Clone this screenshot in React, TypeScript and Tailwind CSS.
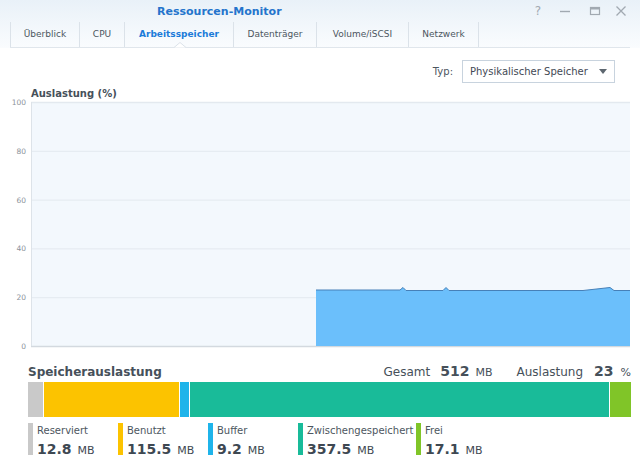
import React from "react";

const font = { fontFamily: '"DejaVu Sans", Verdana, sans-serif' };

const tabs = [
  { label: "Überblick", w: "w-[69px]" },
  { label: "CPU", w: "w-[45px]" },
  { label: "Arbeitsspeicher", w: "w-[109px]", active: true },
  { label: "Datenträger", w: "w-[83px]" },
  { label: "Volume/iSCSI", w: "w-[92px]" },
  { label: "Netzwerk", w: "w-[70px]" },
];

const legend = [
  { label: "Reserviert", value: "12.8", color: "bg-[#c9c9c9]", w: "w-[90px]" },
  { label: "Benutzt", value: "115.5", color: "bg-[#fcc300]", w: "w-[90px]" },
  { label: "Buffer", value: "9.2", color: "bg-[#1fb4ea]", w: "w-[90px]" },
  { label: "Zwischengespeichert", value: "357.5", color: "bg-[#19bb99]", w: "w-[118px]" },
  { label: "Frei", value: "17.1", color: "bg-[#80c528]", w: "w-[90px]" },
];

function WindowControls() {
  return (
    <div className="flex items-center gap-[14px] pr-[13px] text-[#a1a9b1]">
      <span className="text-[12px] leading-none">?</span>
      <svg width="12" height="12" viewBox="0 0 12 12" className="ml-[4px]">
        <path d="M1 6.5 H11" stroke="currentColor" strokeWidth="1.4" />
      </svg>
      <svg width="12" height="12" viewBox="0 0 12 12" className="ml-[4px]">
        <rect x="1.5" y="2.5" width="9" height="7" fill="none" stroke="currentColor" strokeWidth="1.2" />
        <path d="M1.5 3.5 H10.5" stroke="currentColor" strokeWidth="2" />
      </svg>
      <svg width="12" height="12" viewBox="0 0 12 12">
        <path d="M1.5 1.5 L10.5 10.5 M10.5 1.5 L1.5 10.5" stroke="currentColor" strokeWidth="1.3" />
      </svg>
    </div>
  );
}

// svg sits at page y 99; the plot's 100% line is at page y 102
function Chart() {
  const labels = [100, 80, 60, 40, 20, 0];
  const top = 3;
  const step = 48.8;
  const base = top + step * 5;
  const pts: [number, number][] = [
    [316, 290], [400, 290], [403, 287.5], [406, 290.5], [443, 290.5], [446, 287.5],
    [449, 290.5], [583, 290.5], [610, 287.5], [614, 290.5], [630, 290.5],
  ];
  const l = pts.map(([x, y], i) => `${i ? "L" : "M"}${x} ${y - 99}`).join(" ");
  return (
    <svg width="640" height="253" viewBox="0 0 640 253" className="block overflow-visible">
      <rect x="31" y={top} width="599" height={step * 5} fill="#f3f8fd" />
      {labels.map((v, i) => (
        <g key={v}>
          <line
            x1="31"
            x2="630"
            y1={top + i * step + 0.5}
            y2={top + i * step + 0.5}
            stroke={i === 5 ? "#d3d9df" : "#e3e9ef"}
            strokeWidth={i === 0 || i === 5 ? 1.5 : 1}
          />
          <text x="26" y={top + i * step + 3} textAnchor="end" fontSize="7.5" fill="#8b939b" style={font}>
            {v}
          </text>
        </g>
      ))}
      <line x1="31.5" x2="31.5" y1={top} y2={base} stroke="#dde3e9" />
      <path d={`${l} L630 ${base} L316 ${base} Z`} fill="#6bbffb" />
      <path d={l} fill="none" stroke="#4680b8" strokeWidth="1" />
    </svg>
  );
}

export default function App() {
  return (
    <div className="w-[640px] h-[466px] bg-white overflow-hidden text-[#46505a]" style={font}>
      <header className="h-[48px] bg-gradient-to-b from-[#e9f1f8] to-[#fafcfe]">
        <div className="h-[22px] flex items-center justify-between">
          <span className="pl-[157px] pt-[2px] text-[11px] font-bold text-[#2474cc]">Ressourcen-Monitor</span>
          <WindowControls />
        </div>
        <div className="relative mx-[10px] h-[26px] flex items-stretch border-b border-[#e0e6ec]">
          {tabs.map((t) => (
            <div
              key={t.label}
              className={`${t.w} flex items-center justify-center border-l border-[#dbe2e9] text-[9px] ${
                t.active ? "font-bold text-[#1b7bd9]" : "text-[#4c5660]"
              }`}
            >
              {t.label}
            </div>
          ))}
          <div className="border-l border-[#dbe2e9]" />
          <svg width="12" height="6" viewBox="0 0 12 6" className="absolute left-[164px] bottom-[-1px]">
            <path d="M0 5.5 L6 0.5 L12 5.5" fill="#ffffff" stroke="#dbe2e9" />
          </svg>
        </div>
      </header>

      <div className="flex items-center justify-end gap-[9px] pr-[25px] mt-[12px]">
        <span className="text-[10px] text-[#4c5660]">Typ:</span>
        <div className="w-[153px] h-[23px] border border-[#c8d3de] bg-white flex items-center justify-between pl-[7px] pr-[7px]">
          <span className="text-[10px] text-[#3f4954] whitespace-nowrap overflow-hidden w-[127px]">Physikalischer Speicher</span>
          <svg width="8" height="5" viewBox="0 0 8 5">
            <path d="M0 0 H8 L4 5 Z" fill="#5d6770" />
          </svg>
        </div>
      </div>

      <div className="pl-[31px] mt-[5px] h-[11px] text-[10px] font-bold text-[#46505a] leading-[11px]">Auslastung (%)</div>
      <Chart />

      <div className="ml-[28px] mr-[9px] mt-[10px] flex items-end justify-between h-[16px]">
        <span className="text-[12px] font-bold text-[#46505a] leading-none">Speicherauslastung</span>
        <div className="flex items-baseline text-[#46505a] leading-none">
          <span className="text-[12px]">Gesamt</span>
          <span className="ml-[10px] text-[14px] font-bold">512</span>
          <span className="ml-[6px] text-[11px]">MB</span>
          <span className="ml-[24px] text-[12px]">Auslastung</span>
          <span className="ml-[11px] text-[14px] font-bold">23</span>
          <span className="ml-[7px] text-[11px]">%</span>
        </div>
      </div>

      <div className="ml-[28px] w-[603px] h-[35px] mt-[4px] flex gap-[1px]">
        <div className="w-[15px] bg-[#c9c9c9]" />
        <div className="w-[135px] bg-[#fcc300]" />
        <div className="w-[9px] bg-[#1fb4ea]" />
        <div className="flex-1 bg-[#19bb99]" />
        <div className="w-[21px] bg-[#80c528]" />
      </div>

      <div className="ml-[28px] mt-[6px] flex">
        {legend.map((it) => (
          <div key={it.label} className={`${it.w} flex h-[32px]`}>
            <div className={`w-[5px] ${it.color}`} />
            <div className="pl-[4px] flex flex-col">
              <span className="text-[10px] leading-[12px] mt-[2px] text-[#4c5660] whitespace-nowrap">{it.label}</span>
              <span className="mt-[4px] leading-none whitespace-nowrap text-[#3e4852]">
                <span className="text-[14px] font-bold">{it.value}</span>
                <span className="ml-[6px] text-[11px]">MB</span>
              </span>
            </div>
          </div>
        ))}
      </div>
    </div>
  );
}
